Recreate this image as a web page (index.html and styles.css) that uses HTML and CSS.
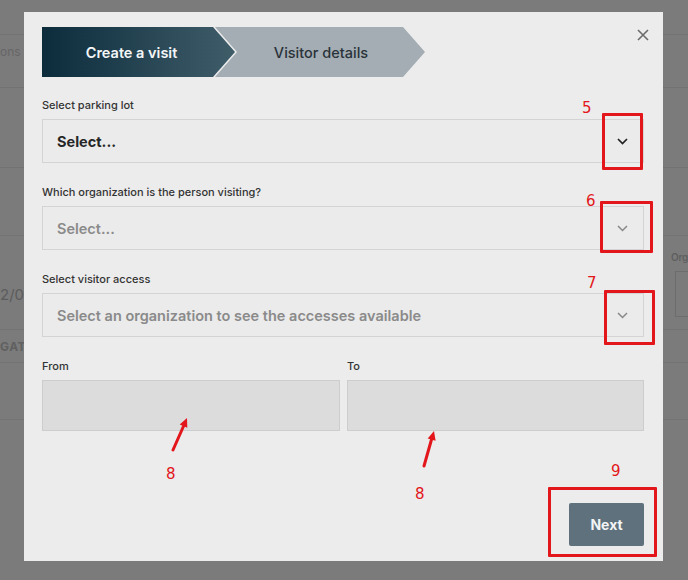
FILE: index.html
```html
<!DOCTYPE html>
<html>
<head>
<meta charset="utf-8">
<link rel="stylesheet" href="styles.css">
</head>
<body>
<div class="bg">
  <div class="bg-row r1"></div>
  <div class="bg-row r2"><span class="bg-left t-actions">ons</span></div>
  <div class="bg-row r3"></div>
  <div class="bg-row r4"></div>
  <div class="bg-row r5">
    <span class="bg-left t-date">2/08</span>
    <div class="bg-right">
      <span class="t-org">Org</span>
      <div class="bg-box"></div>
    </div>
  </div>
  <div class="bg-row r6"><span class="bg-left t-gate">GATI</span></div>
  <div class="bg-row r7"></div>
</div>

<div class="modal">
  <button class="close" aria-label="Close">
    <svg width="12" height="12" viewBox="0 0 12 12"><path d="M1 1 L11 11 M11 1 L1 11" stroke="#6b6b6b" stroke-width="1.6" fill="none"/></svg>
  </button>
  <div class="steps">
    <div class="step step-active">Create a visit</div>
    <div class="step step-next">Visitor details</div>
  </div>

  <div class="field">
    <label class="label">Select parking lot</label>
    <div class="select">
      <span class="select-text">Select...</span>
      <svg class="chev" width="11" height="7" viewBox="0 0 11 7"><path d="M1 1 L5.5 5.5 L10 1" stroke="#222" stroke-width="1.7" fill="none"/></svg>
    </div>
  </div>

  <div class="field">
    <label class="label">Which organization is the person visiting?</label>
    <div class="select">
      <span class="select-text muted">Select...</span>
      <svg class="chev" width="11" height="7" viewBox="0 0 11 7"><path d="M1 1 L5.5 5.5 L10 1" stroke="#888" stroke-width="1.5" fill="none"/></svg>
    </div>
  </div>

  <div class="field">
    <label class="label">Select visitor access</label>
    <div class="select">
      <span class="select-text muted">Select an organization to see the accesses available</span>
      <svg class="chev" width="11" height="7" viewBox="0 0 11 7"><path d="M1 1 L5.5 5.5 L10 1" stroke="#888" stroke-width="1.5" fill="none"/></svg>
    </div>
  </div>

  <div class="dates">
    <div class="date-field">
      <label class="label">From</label>
      <div class="date-box"></div>
    </div>
    <div class="date-field">
      <label class="label">To</label>
      <div class="date-box"></div>
    </div>
  </div>

  <div class="actions">
    <button class="next">Next</button>
  </div>
</div>

<div class="annot">
  <div class="rbox b5"></div>
  <div class="rbox b6"></div>
  <div class="rbox b7"></div>
  <div class="rbox b9"></div>
  <span class="num n5">5</span>
  <span class="num n6">6</span>
  <span class="num n7">7</span>
  <span class="num n8a">8</span>
  <span class="num n8b">8</span>
  <span class="num n9">9</span>
  <svg class="arrows" width="688" height="580" viewBox="0 0 688 580">
    <line x1="173" y1="450" x2="183.6" y2="426" stroke="#e3161b" stroke-width="3" stroke-linecap="round"/>
    <polygon points="187,418 187.3,427.8 179.7,424.6" fill="#e3161b"/>
    <line x1="424" y1="466" x2="431.5" y2="439.5" stroke="#e3161b" stroke-width="3" stroke-linecap="round"/>
    <polygon points="434,431 435.6,440.8 427.7,438.6" fill="#e3161b"/>
  </svg>
</div>
</body>
</html>
```

FILE: styles.css
```css
* { box-sizing: border-box; }

html, body {
  margin: 0;
  padding: 0;
}

body {
  width: 688px;
  height: 580px;
  overflow: hidden;
  position: relative;
  background: #7b7b7b;
  font-family: Inter, "Noto Sans", "Liberation Sans", sans-serif;
}

/* background page (dimmed) */
.bg {
  display: flex;
  flex-direction: column;
  width: 688px;
}

.bg-row {
  display: flex;
  align-items: center;
  border-bottom: 1px solid #737373;
  overflow: hidden;
}

.r1 { height: 35px; }
.r2 { height: 53px; align-items: flex-start; padding-top: 9px; }
.r3 { height: 80px; }
.r4 { height: 68px; }
.r5 { height: 94px; justify-content: space-between; }
.r6 { height: 33px; }
.r7 { height: 57px; }

.bg-left {
  white-space: nowrap;
  color: #5e5e5e;
}

.t-actions {
  font-size: 12px;
  color: #666;
}

.t-date {
  font-size: 15px;
  margin-top: 24px;
  color: #5c5c5c;
}

.t-gate {
  font-size: 12px;
  font-weight: 700;
  letter-spacing: 0.5px;
  color: #606060;
}

.bg-right {
  width: 17px;
  align-self: stretch;
  display: flex;
  flex-direction: column;
  padding-top: 15px;
}

.t-org {
  font-size: 10px;
  font-weight: 600;
  letter-spacing: -0.2px;
  color: #5f5f5f;
  white-space: nowrap;
}

.bg-box {
  margin-top: 8px;
  margin-left: 4px;
  width: 40px;
  height: 46px;
  border: 1px solid #6d6d6d;
}

/* modal */
.modal {
  position: absolute;
  left: 24px;
  top: 12px;
  width: 639px;
  height: 549px;
  background: #ececec;
  padding: 15px 19px 15px 18px;
  display: flex;
  flex-direction: column;
}

.close {
  position: absolute;
  right: 14px;
  top: 17px;
  width: 12px;
  height: 12px;
  padding: 0;
  border: 0;
  background: none;
  display: flex;
}

.steps {
  display: flex;
  height: 50px;
}

.step {
  height: 50px;
  display: flex;
  align-items: center;
  justify-content: center;
  font-size: 14.5px;
}

.step-active {
  width: 193px;
  padding-right: 14px;
  background: linear-gradient(to right, #0c2c3c, #3f5c69);
  color: #f4f6f7;
  font-weight: 600;
  clip-path: polygon(0 0, 171px 0, 193px 25px, 171px 50px, 0 50px);
}

.step-next {
  width: 210px;
  margin-left: -20px;
  padding-left: 2px;
  background: #a3adb3;
  color: #2a323a;
  font-weight: 500;
  clip-path: polygon(0 0, 188px 0, 210px 25px, 188px 50px, 0 50px, 22px 25px);
}

.field {
  display: flex;
  flex-direction: column;
  margin-top: 22px;
}

.steps + .field { margin-top: 21px; }

.label {
  font-size: 11px;
  line-height: 14px;
  color: #333;
  font-weight: 500;
  margin-bottom: 7px;
}

.select {
  height: 44px;
  border: 1px solid #d4d4d4;
  background: #ebebeb;
  display: flex;
  align-items: center;
  justify-content: space-between;
  padding: 0 15px 0 14px;
}

.select-text {
  font-size: 14.5px;
  font-weight: 700;
  color: #262626;
}

.select-text.muted {
  color: #8a8a8a;
  font-weight: 600;
}

.chev { display: block; }

.dates {
  display: grid;
  grid-template-columns: 298px 297px;
  column-gap: 7px;
  margin-top: 22px;
}

.date-field {
  display: flex;
  flex-direction: column;
}

.date-box {
  height: 51px;
  background: #dcdcdc;
  border: 1px solid #cdcdcd;
}

.actions {
  display: flex;
  justify-content: flex-end;
  margin-top: 72px;
}

.next {
  width: 75px;
  height: 43px;
  border: 0;
  border-radius: 2px;
  background: #5e717d;
  color: #f2f4f5;
  font-family: Inter, "Noto Sans", "Liberation Sans", sans-serif;
  font-size: 14px;
  font-weight: 700;
}

/* annotations overlay */
.annot {
  position: absolute;
  left: 0;
  top: 0;
  width: 688px;
  height: 580px;
  pointer-events: none;
}

.rbox {
  position: absolute;
  border: 3px solid #e3161b;
  border-radius: 1px;
}

.b5 { left: 602px; top: 113px; width: 41px; height: 57px; }
.b6 { left: 600px; top: 201px; width: 53px; height: 52px; }
.b7 { left: 604px; top: 290px; width: 51px; height: 55px; }
.b9 { left: 548px; top: 487px; width: 109px; height: 70px; }

.num {
  position: absolute;
  font-family: "DejaVu Sans", sans-serif;
  font-size: 15px;
  line-height: 15px;
  color: #e3161b;
}

.n5 { left: 582px; top: 101px; }
.n6 { left: 586px; top: 194px; }
.n7 { left: 587px; top: 276px; }
.n8a { left: 166px; top: 467px; }
.n8b { left: 415px; top: 487px; }
.n9 { left: 611px; top: 464px; }

.arrows {
  position: absolute;
  left: 0;
  top: 0;
}
```
